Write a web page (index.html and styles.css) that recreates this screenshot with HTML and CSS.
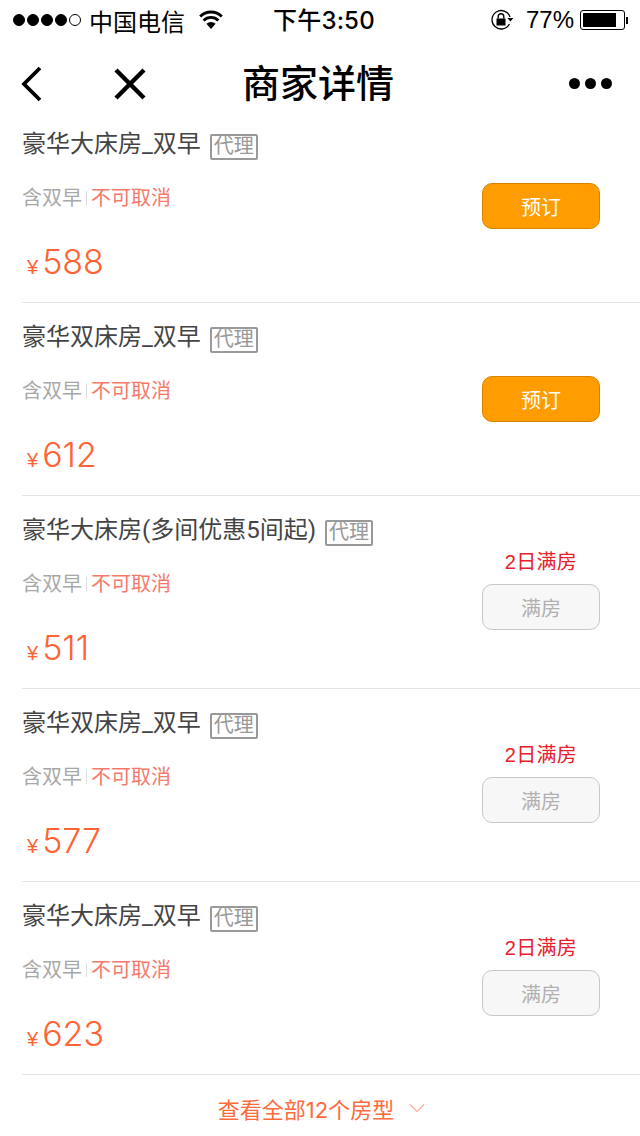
FILE: index.html
```html
<!DOCTYPE html>
<html lang="zh-CN">
<head>
  <meta charset="UTF-8" />
  <title>商家详情</title>
  <link rel="stylesheet" href="styles.css">
</head>
<body>
  <!-- Status bar -->
  <div class="statusbar">
    <div class="status-left">
      <span class="signal"><i></i><i></i><i></i><i></i><i class="off"></i></span>
      <span class="carrier">中国电信</span>
      <svg class="wifi" width="24" height="20" viewBox="0 0 24 20">
        <path d="M12 19 L7.4 13.8 A7 7 0 0 1 16.6 13.8 Z" fill="#000"/>
        <path d="M4.6 10.4 A10.6 10.6 0 0 1 19.4 10.4" fill="none" stroke="#000" stroke-width="2.8"/>
        <path d="M1.2 6.4 A15.4 15.4 0 0 1 22.8 6.4" fill="none" stroke="#000" stroke-width="2.8"/>
      </svg>
    </div>
    <div class="status-time">下午3:50</div>
    <div class="status-right">
      <svg class="lock" width="24" height="22" viewBox="0 0 24 22">
        <path d="M20 8 A9.2 9.2 0 1 0 19.4 15" fill="none" stroke="#000" stroke-width="1.3"/>
        <path d="M17.4 9 L23.4 9 L20.4 12.6 Z" fill="#000"/>
        <rect x="6.5" y="9.5" width="9" height="7" fill="#000"/>
        <path d="M8.2 9.5 V7.6 A2.8 2.8 0 0 1 13.8 7.6 V9.5" fill="none" stroke="#000" stroke-width="1.4"/>
      </svg>
      <span class="percent">77%</span>
      <span class="battery"><span class="battery-fill"></span></span>
      <span class="battery-tip"></span>
    </div>
  </div>

  <!-- Nav bar -->
  <div class="navbar">
    <svg class="nav-back" width="24" height="38" viewBox="0 0 24 38">
      <path d="M20 3 L4 19 L20 35" fill="none" stroke="#000" stroke-width="3.8"/>
    </svg>
    <svg class="nav-close" width="32" height="32" viewBox="0 0 32 32">
      <path d="M2 2 L30 30 M30 2 L2 30" fill="none" stroke="#000" stroke-width="4.4"/>
    </svg>
    <h1>商家详情</h1>
    <div class="nav-more"><i></i><i></i><i></i></div>
  </div>

  <!-- Room list -->
  <div class="rooms">
    <div class="room">
      <div class="room-info">
        <div class="room-title">豪华大床房_双早<span class="tag">代理</span></div>
        <div class="room-desc">含双早<span class="sep"></span><em>不可取消</em></div>
        <div class="price"><small>¥</small>588</div>
      </div>
      <div class="room-action">
        <button class="btn">预订</button>
      </div>
    </div>
    <div class="room">
      <div class="room-info">
        <div class="room-title">豪华双床房_双早<span class="tag">代理</span></div>
        <div class="room-desc">含双早<span class="sep"></span><em>不可取消</em></div>
        <div class="price"><small>¥</small>612</div>
      </div>
      <div class="room-action">
        <button class="btn">预订</button>
      </div>
    </div>
    <div class="room">
      <div class="room-info">
        <div class="room-title">豪华大床房(多间优惠5间起)<span class="tag">代理</span></div>
        <div class="room-desc">含双早<span class="sep"></span><em>不可取消</em></div>
        <div class="price"><small>¥</small>511</div>
      </div>
      <div class="room-action">
        <div class="full-note">2日满房</div>
        <button class="btn full">满房</button>
      </div>
    </div>
    <div class="room">
      <div class="room-info">
        <div class="room-title">豪华双床房_双早<span class="tag">代理</span></div>
        <div class="room-desc">含双早<span class="sep"></span><em>不可取消</em></div>
        <div class="price"><small>¥</small>577</div>
      </div>
      <div class="room-action">
        <div class="full-note">2日满房</div>
        <button class="btn full">满房</button>
      </div>
    </div>
    <div class="room">
      <div class="room-info">
        <div class="room-title">豪华大床房_双早<span class="tag">代理</span></div>
        <div class="room-desc">含双早<span class="sep"></span><em>不可取消</em></div>
        <div class="price"><small>¥</small>623</div>
      </div>
      <div class="room-action">
        <div class="full-note">2日满房</div>
        <button class="btn full">满房</button>
      </div>
    </div>
  </div>

  <div class="more">
    查看全部12个房型
    <svg width="16" height="10" viewBox="0 0 18 10">
      <path d="M1 1 L9 9 L17 1" fill="none" stroke="#ff9c80" stroke-width="1.3"/>
    </svg>
  </div>
</body>
</html>
```

FILE: styles.css
```css
* {
  margin: 0;
  padding: 0;
  box-sizing: border-box;
}
html, body {
  height: 1136px;
  overflow: hidden;
}
body {
  background: #fff;
  color: #000;
  font-family: "Liberation Sans", "Noto Sans CJK SC", sans-serif;
}
.statusbar {
  height: 40px;
  display: flex;
  align-items: center;
  justify-content: space-between;
  font-size: 24px;
  position: relative;
}
.status-left {
  display: flex;
  align-items: center;
  padding-left: 13px;
}
.signal {
  display: flex;
  gap: 2px;
}
.signal i {
  width: 12px;
  height: 12px;
  border-radius: 50%;
  background: #000;
  border: 1px solid #000;
}
.signal i.off {
  background: #fff;
}
.carrier {
  margin-left: 8px;
}
.wifi {
  margin-left: 14px;
}
.status-time {
  position: absolute;
  left: 273px;
  top: 7px;
  line-height: 28px;
  font-family: Inter, "Noto Sans CJK SC", sans-serif;
  font-weight: 500;
  letter-spacing: 0.2px;
}
.status-right {
  display: flex;
  align-items: center;
  padding-right: 12px;
}
.percent {
  margin-left: 12px;
}
.battery {
  width: 45px;
  height: 20px;
  margin-left: 6px;
  border: 1px solid #000;
  border-radius: 3px;
  padding: 2px;
}
.battery-fill {
  display: block;
  width: 33px;
  height: 14px;
  background: #000;
}
.battery-tip {
  width: 2px;
  height: 7px;
  margin-left: 1px;
  background: #000;
}
.navbar {
  height: 88px;
  position: relative;
  display: flex;
  align-items: center;
  justify-content: center;
  padding-right: 4px;
}
.navbar h1 {
  font-size: 38px;
  font-weight: 500;
  line-height: 90px;
}
.nav-back {
  position: absolute;
  left: 20px;
  top: 25px;
}
.nav-close {
  position: absolute;
  left: 114px;
  top: 28px;
}
.nav-more {
  position: absolute;
  left: 569px;
  top: 38px;
  display: flex;
  gap: 5px;
}
.nav-more i {
  width: 11px;
  height: 11px;
  border-radius: 50%;
  background: #000;
}
.rooms {
  margin-top: -18px;
  position: relative;
}
.room {
  height: 193px;
  margin-left: 22px;
  border-bottom: 1px solid #e4e4e4;
  display: flex;
  justify-content: space-between;
}
.room-info {
  padding-top: 18px;
}
.room-title {
  font-family: Roboto, "Noto Sans CJK SC", sans-serif;
  font-size: 24px;
  line-height: 32px;
  color: #444;
  display: flex;
  align-items: center;
}
.tag {
  width: 48px;
  height: 26px;
  margin-left: 9px;
  margin-top: 6px;
  border: 2px solid #999;
  border-radius: 2px;
  font-size: 20px;
  line-height: 21px;
  color: #999;
  text-align: center;
}
.room-desc {
  margin-top: 24px;
  font-size: 20px;
  line-height: 28px;
  color: #a8a8a8;
  display: flex;
  align-items: center;
}
.room-desc em {
  font-style: normal;
  color: #f5796b;
}
.sep {
  width: 1px;
  height: 14px;
  margin: 0 4px;
  background: #ddd;
}
.price {
  margin-top: 28px;
  padding-left: 5px;
  font-family: Inter, "Liberation Sans", sans-serif;
  font-size: 34px;
  font-weight: 300;
  line-height: 44px;
  color: #ff6333;
}
.price small {
  font-family: "Liberation Sans", sans-serif;
  font-size: 20px;
  margin-right: 4px;
}
.room-action {
  width: 118px;
  margin-right: 40px;
  padding-top: 73px;
}
.room-action:has(.full-note) {
  padding-top: 52px;
}
.btn {
  display: block;
  width: 118px;
  height: 46px;
  border: 1px solid #d98200;
  border-radius: 10px;
  background: #ff9c00;
  color: #fff;
  font-family: inherit;
  font-size: 20px;
}
.btn.full {
  background: #f7f7f7;
  border-color: #c8c8c8;
  color: #b0b0b0;
}
.full-note {
  height: 28px;
  margin-bottom: 8px;
  font-size: 20px;
  line-height: 28px;
  letter-spacing: 0.3px;
  color: #e8202a;
  text-align: center;
  white-space: nowrap;
}
.more {
  height: 60px;
  display: flex;
  align-items: center;
  justify-content: center;
  gap: 15px;
  font-family: Inter, "Noto Sans CJK SC", sans-serif;
  font-size: 22px;
  color: #ff6b3d;
  padding-left: 3px;
  padding-top: 6px;
}
```
